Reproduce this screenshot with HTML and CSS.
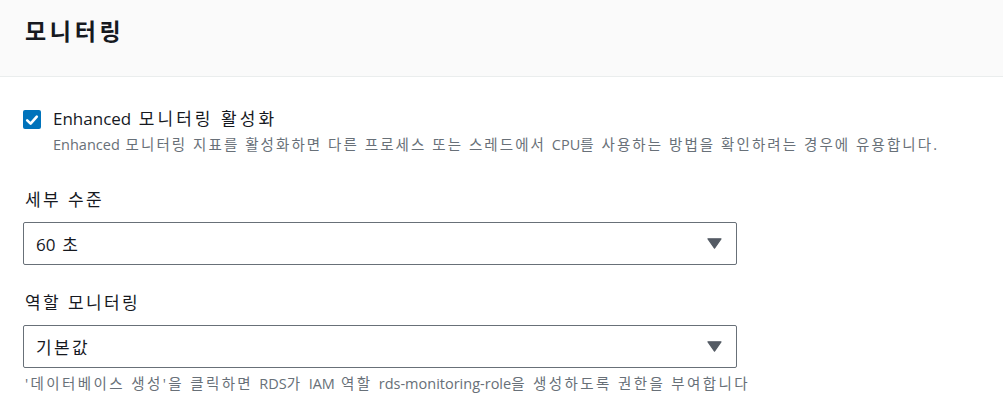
FILE: index.html
```html
<!DOCTYPE html>
<html lang="ko">
<head>
<meta charset="utf-8">
<link rel="stylesheet" href="styles.css">
</head>
<body>
<div class="panel">
  <header class="panel-header">
    <h2 class="title">모니터링</h2>
  </header>
  <div class="panel-body">
    <div class="check-row">
      <span class="checkbox">
        <svg viewBox="0 0 18 18" width="18" height="18"><path d="M4.2 9.4 L7.6 12.6 L13.8 5.6" fill="none" stroke="#fff" stroke-width="2.6" stroke-linecap="round" stroke-linejoin="round"/></svg>
      </span>
      <div class="check-text">
        <div class="check-label"><span class="en">Enhanced</span> 모니터링 활성화</div>
        <div class="check-desc"><span class="en">Enhanced</span> 모니터링 지표를 활성화하면 다른 프로세스 또는 스레드에서 <span class="en">CPU</span>를 사용하는 방법을 확인하려는 경우에 유용합니다.</div>
      </div>
    </div>

    <div class="field">
      <div class="field-label">세부 수준</div>
      <div class="select">
        <span class="select-value"><span class="en">60</span> 초</span>
        <svg class="caret" viewBox="0 0 15 11" width="15" height="11"><path d="M1 0.8 H14 L7.5 10.2 Z" fill="#545b64" stroke="#545b64" stroke-width="1.2" stroke-linejoin="round"/></svg>
      </div>
    </div>

    <div class="field">
      <div class="field-label">역할 모니터링</div>
      <div class="select">
        <span class="select-value">기본값</span>
        <svg class="caret" viewBox="0 0 15 11" width="15" height="11"><path d="M1 0.8 H14 L7.5 10.2 Z" fill="#545b64" stroke="#545b64" stroke-width="1.2" stroke-linejoin="round"/></svg>
      </div>
      <div class="field-hint">'데이터베이스 생성'을 클릭하면 <span class="en">RDS</span>가 <span class="en">IAM</span> 역할 <span class="en">rds-monitoring-role</span>을 생성하도록 권한을 부여합니다</div>
    </div>
  </div>
</div>
</body>
</html>
```

FILE: styles.css
```css
html, body {
  margin: 0;
  padding: 0;
  background: #ffffff;
}
body {
  font-family: "Open Sans", "Noto Sans CJK KR", sans-serif;
  color: #16191f;
  letter-spacing: 0.15em;
}
.en {
  letter-spacing: 0;
}
.panel {
  width: 1003px;
}
.panel-header {
  background: #fafafa;
  border-bottom: 1px solid #eaeded;
  height: 77px;
  box-sizing: border-box;
  padding: 15px 25px 0;
}
.title {
  margin: 0;
  font-size: 23px;
  line-height: 32px;
  font-weight: 700;
  letter-spacing: 0.16em;
  color: #16191f;
}
.panel-body {
  padding: 32px 23px 0;
}
.check-row {
  display: flex;
  align-items: flex-start;
  gap: 12px;
}
.checkbox {
  width: 18px;
  height: 19px;
  margin-top: 1px;
  background: #0073bb;
  border-radius: 2px;
  display: flex;
  align-items: center;
  flex-shrink: 0;
}
.check-label {
  font-size: 17px;
  line-height: 20px;
  letter-spacing: 0.18em;
  color: #16191f;
}
.check-desc {
  font-size: 14.5px;
  line-height: 20px;
  margin-top: 6px;
  letter-spacing: 0.143em;
  color: #687078;
}
.field {
  margin-top: 33px;
}
.field + .field {
  margin-top: 26px;
}
.field-label {
  padding-left: 2px;
  font-size: 17px;
  line-height: 24px;
  color: #16191f;
}
.select {
  margin-top: 10px;
  width: 714px;
  height: 43px;
  box-sizing: border-box;
  border: 1px solid #687078;
  border-radius: 2px;
  display: flex;
  align-items: center;
  justify-content: space-between;
  padding: 0 14px 0 12px;
}
.select-value {
  font-size: 17px;
  color: #16191f;
}
.caret {
  display: block;
}
.field-hint {
  margin-top: 6px;
  padding-left: 2px;
  font-size: 14.5px;
  line-height: 20px;
  color: #687078;
}
```
